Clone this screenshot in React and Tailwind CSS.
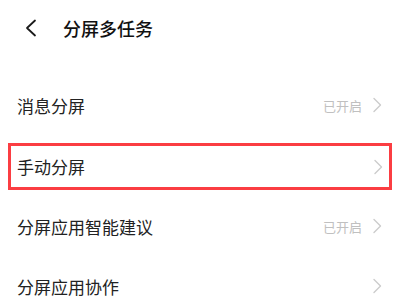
import React from 'react';

const Chevron = () => (
  <svg width="10" height="16" viewBox="0 0 10 16" className="shrink-0">
    <polyline points="2,1.5 8.5,8 2,14.5" fill="none" stroke="#cccccc" strokeWidth="1.4" strokeLinecap="round" strokeLinejoin="round" />
  </svg>
);

const Row = ({ label, status, className = '' }) => (
  <div className={`flex items-center pl-[17px] pr-[18px] ${className}`}>
    <span className="flex-1 text-[17px] text-[#222222] leading-none">{label}</span>
    {status && <span className="text-[13px] text-[#c0c0c0] mr-[10px] leading-none">{status}</span>}
    <Chevron />
  </div>
);

export default function App() {
  return (
    <div
      className="w-[400px] h-[300px] bg-white overflow-hidden"
      style={{ fontFamily: '"Noto Sans CJK SC", "Noto Sans", sans-serif' }}
    >
      {/* Header */}
      <div className="flex items-center h-[56px] pl-[25px]">
        <svg width="12" height="18" viewBox="0 0 12 18" className="shrink-0">
          <polyline points="10,1.5 2,9 10,16.5" fill="none" stroke="#1a1a1a" strokeWidth="1.8" strokeLinecap="round" strokeLinejoin="round" />
        </svg>
        <span className="ml-[26px] text-[18px] font-medium text-[#111111] leading-none">分屏多任务</span>
      </div>

      <div className="h-[19px]" />

      <Row label="消息分屏" status="已开启" className="h-[60px]" />

      {/* highlighted row */}
      <div className="h-[62px] pt-[8px] px-[8px]">
        <div className="h-[47px] border-[3px] border-[#fb3d42] flex items-center pl-[6px] pr-[6px]">
          <span className="flex-1 text-[17px] text-[#222222] leading-none">手动分屏</span>
          <Chevron />
        </div>
      </div>

      <Row label="分屏应用智能建议" status="已开启" className="h-[58px]" />
      <Row label="分屏应用协作" className="h-[62px]" />
    </div>
  );
}
